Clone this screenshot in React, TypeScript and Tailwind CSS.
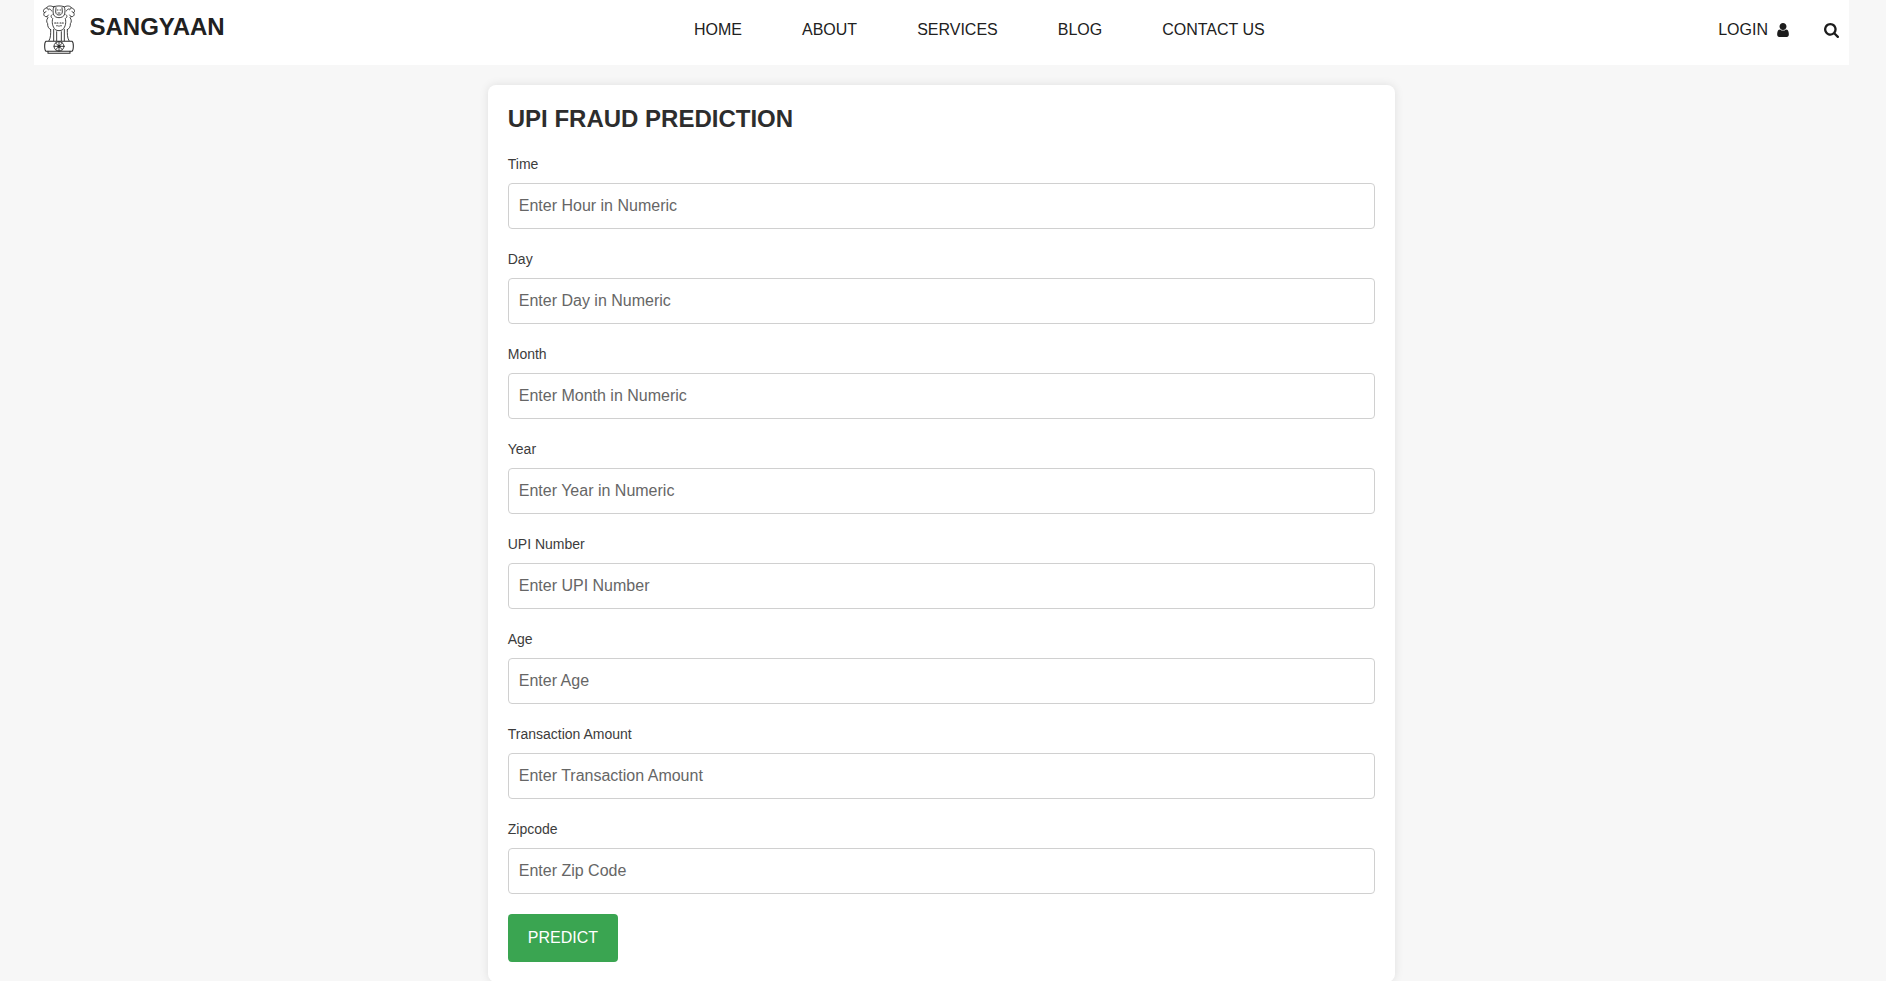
import React from 'react';

const links = ['HOME', 'ABOUT', 'SERVICES', 'BLOG', 'CONTACT US'];

const fields = [
  { label: 'Time', placeholder: 'Enter Hour in Numeric' },
  { label: 'Day', placeholder: 'Enter Day in Numeric' },
  { label: 'Month', placeholder: 'Enter Month in Numeric' },
  { label: 'Year', placeholder: 'Enter Year in Numeric' },
  { label: 'UPI Number', placeholder: 'Enter UPI Number' },
  { label: 'Age', placeholder: 'Enter Age' },
  { label: 'Transaction Amount', placeholder: 'Enter Transaction Amount' },
  { label: 'Zipcode', placeholder: 'Enter Zip Code' },
];

function EmblemHalf() {
  return (
    <g>
      {/* side lion */}
      <path d="M71 21 C64 16 52 17 50 24 C42 25 37 33 43 38 C39 44 43 51 51 50 L54 53 C49 59 49 66 53 71 C52 79 56 86 62 89" />
      <path d="M50 24 L55 29 M43 38 L48 35 M51 50 L55 45 M56 27 C60 26 63 29 65 33" />
      <path d="M66 44 C62 47 62 51 66 54" />
      {/* legs */}
      <path d="M62 89 C62 100 63 112 57 122 M71 88 L71 122 M80 95 L80 122" />
    </g>
  );
}

function Emblem() {
  return (
    <svg
      className="h-[50px] w-[34px] shrink-0"
      viewBox="36 15 102 150"
      fill="none"
      stroke="#2b2b2b"
      strokeWidth="2.7"
      strokeLinecap="round"
      strokeLinejoin="round"
    >
      <EmblemHalf />
      <g transform="translate(174 0) scale(-1 1)">
        <EmblemHalf />
      </g>
      {/* centre lion */}
      <path d="M72 20 C80 17 94 17 102 20 C106 27 105 34 104 42 C102 50 94 53 87 53 C80 53 72 50 70 42 C69 34 68 27 72 20 Z" />
      <path d="M78 23 L77 36 C78 43 82 45 87 45 C92 45 96 43 97 36 L96 23 M82 30 L84 30 M90 30 L92 30 M84 39 L90 39" />
      <path d="M68 56 C65 66 67 80 76 89 C82 93 92 93 98 89 C107 80 109 66 106 56" />
      <path d="M74 69 L77 69 M81 69 L84 69 M90 69 L93 69 M97 69 L100 69 M80 77 L82 77 M86 78 L88 78 M92 77 L94 77" strokeWidth="3.2" />
      {/* abacus with wheel */}
      <path d="M48 124 L126 124 C130 126 130 130 130 138 C130 147 130 151 126 154 L48 154 C44 151 44 147 44 138 C44 130 44 126 48 124 Z" strokeWidth="3.2" />
      <path d="M54 154 L54 160 L120 160 L120 154" strokeWidth="3.2" />
      <ellipse cx="87" cy="139" rx="15" ry="14" />
      <circle cx="87" cy="139" r="3.5" fill="#2b2b2b" />
      <path d="M87 125 L87 153 M72 139 L102 139 M77 129 L97 149 M97 129 L77 149" />
    </svg>
  );
}

function UserIcon() {
  return (
    <svg className="ml-[9px] h-[14px] w-[12px]" viewBox="0 128 1280 1536" fill="currentColor">
      <path d="M1280 1399q0 109-62.5 187t-150.5 78h-854q-88 0-150.5-78t-62.5-187q0-85 8.5-160.5t31.5-152 58.5-131 94-89 134.5-34.5q131 128 313 128t313-128q76 0 134.5 34.5t94 89 58.5 131 31.5 152 8.5 160.5zm-256-887q0 159-112.5 271.5t-271.5 112.5-271.5-112.5-112.5-271.5 112.5-271.5 271.5-112.5 271.5 112.5 112.5 271.5z" />
    </svg>
  );
}

function SearchIcon() {
  return (
    <svg className="ml-[35px] h-[15px] w-[15px]" viewBox="0 128 1664 1664" fill="currentColor">
      <path d="M1152 832q0-185-131.5-316.5t-316.5-131.5-316.5 131.5-131.5 316.5 131.5 316.5 316.5 131.5 316.5-131.5 131.5-316.5zm512 832q0 52-38 90t-90 38q-54 0-90-38l-343-342q-179 124-399 124-143 0-273.5-55.5t-225-150-150-225-55.5-273.5 55.5-273.5 150-225 225-150 273.5-55.5 273.5 55.5 225 150 150 225 55.5 273.5q0 220-124 399l343 343q37 37 37 90z" />
    </svg>
  );
}

function Header() {
  return (
    <header className="grid h-[65px] grid-cols-[660px_1fr_auto] items-start bg-white text-[#212121]">
      <a className="flex items-start pt-[5px] pl-2">
        <Emblem />
        <span className="mt-[4px] ml-[13.5px] text-2xl leading-9 font-bold">SANGYAAN</span>
      </a>
      <nav className="mt-[18px] flex gap-[60px] text-base whitespace-nowrap">
        {links.map((link) => (
          <a key={link}>{link}</a>
        ))}
      </nav>
      <div className="mt-[18px] flex h-6 items-center pr-[10px] text-base text-[#1c1c1c]">
        <span>LOGIN</span>
        <UserIcon />
        <SearchIcon />
      </div>
    </header>
  );
}

export default function App() {
  return (
    <div className="h-[981px] overflow-hidden bg-[#f7f7f7] pr-[37px] pl-[34px] font-['Liberation_Sans',Arial,sans-serif]">
      <Header />
      <main className="mx-auto mt-5 h-[897px] w-1/2 rounded-lg bg-white p-5 shadow-[0_0_10px_rgba(0,0,0,0.1)]">
        <h1 className="text-2xl leading-[28px] font-bold text-[#2d2d2d]">UPI FRAUD PREDICTION</h1>
        <form className="mt-[22px]">
          <div className="flex flex-col gap-[21px]">
            {fields.map(({ label, placeholder }) => (
              <div key={label} className="flex h-[74px] flex-col justify-between">
                <label className="text-sm leading-[19px] text-[#3c3c3c]">{label}</label>
                <input
                  type="text"
                  placeholder={placeholder}
                  className="h-[46px] w-full rounded border border-[#d0d0d0] px-[10px] text-base placeholder:text-[#666]"
                />
              </div>
            ))}
          </div>
          <button type="button" className="mt-5 h-12 rounded bg-[#3aa551] px-5 text-base text-white">
            PREDICT
          </button>
        </form>
      </main>
    </div>
  );
}
